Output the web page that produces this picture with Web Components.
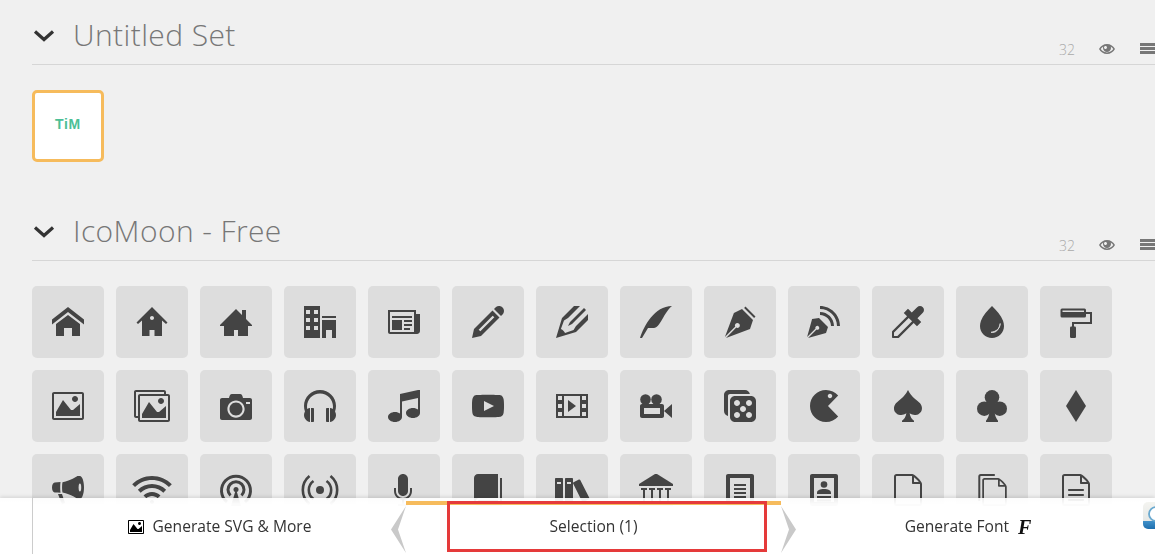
<!DOCTYPE html>
<html lang="en">
<head>
<meta charset="utf-8">
<title>IcoMoon</title>
<style>
html,body{margin:0;padding:0;height:100%;overflow:hidden;background:#f0f0f0;font-family:"Open Sans","Liberation Sans",sans-serif}
</style>
</head>
<body>
<im-app></im-app>
<script>
const FILE='M28.681 7.159c-0.694-0.947-1.662-2.053-2.724-3.116s-2.169-2.030-3.116-2.724c-1.612-1.182-2.393-1.319-2.841-1.319h-15.5c-1.378 0-2.5 1.121-2.5 2.5v27c0 1.378 1.122 2.5 2.5 2.5h23c1.378 0 2.5-1.122 2.5-2.5v-19.5c0-0.448-0.137-1.23-1.319-2.841zM24.543 5.457c0.959 0.959 1.712 1.825 2.268 2.543h-4.811v-4.811c0.718 0.556 1.584 1.309 2.543 2.268zM28 29.5c0 0.271-0.229 0.5-0.5 0.5h-23c-0.271 0-0.5-0.229-0.5-0.5v-27c0-0.271 0.229-0.5 0.5-0.5 0 0 15.499-0 15.5 0v7c0 0.552 0.448 1 1 1h7v19.5z';
const p=d=>`<path fill="currentColor" d="${d}"/>`;
const BG='#ddd';
const ICONS={
home:[32,p('M32 18.451l-16-12.42-16 12.42v-5.064l16-12.42 16 12.42zM28 18v12h-8v-8h-8v8h-8v-12l12-9z')],
home2:[32,p('M16 1L0.500 16.500l1.500 1.500 4-3.500V30h7.500v-6h5v6H26V14.500l4 3.500 1.500-1.500zM16 14c-1.105 0-2-0.895-2-2s0.895-2 2-2c1.105 0 2 0.895 2 2s-0.895 2-2 2z')],
home3:[32,p('M32 19l-6-6v-9h-4v5l-6-6-16 16v1h4v10h10v-6h4v6h10v-10h4z')],
office:[32,p('M0 32h16v-32h-16v32zM10 4h4v4h-4v-4zM10 12h4v4h-4v-4zM10 20h4v4h-4v-4zM2 4h4v4h-4v-4zM2 12h4v4h-4v-4zM2 20h4v4h-4v-4zM18 10h14v2h-14zM18 32h4v-8h6v8h4v-18h-14z')],
newspaper:[32,p('M28 8v-4h-28v22c0 1.105 0.895 2 2 2h27c1.657 0 3-1.343 3-3v-17h-4zM26 26h-24v-20h24v20zM4 10h20v2h-20zM16 14h8v2h-8zM16 18h8v2h-8zM16 22h6v2h-6zM4 14h10v10h-10z')],
pencil:[32,p('M27 0c2.761 0 5 2.239 5 5 0 1.126-0.372 2.164-1 3l-2 2-7-7 2-2c0.836-0.628 1.874-1 3-1zM2 23l-2 9 9-2 18.5-18.5-7-7-18.5 18.5zM22.362 11.362l-14 14-1.724-1.724 14-14 1.724 1.724z')],
pencil2:[32,p('M12 20l4-2 14-14-2-2-14 14-2 4zM9.041 27.097c-0.989-2.085-2.052-3.149-4.137-4.137l3.097-8.525 4-2.435 12-12h-6l-12 12-6 20 20-6 12-12v-6l-12 12-2.435 4z')],
quill:[32,p('M0 32c4-12 14.469-32 32-32-8.219 6.594-12 22-18 22s-6 0-6 0l-6 10h-2z')],
pen:[32,p('M21.500 0.500l10 10-1.400 1.400-10-10zM18 3l11 11-3 9-24 9 10.300-10.400c0.800 0.500 2 0.400 2.800-0.300 1-1 1-2.600 0-3.500s-2.600-1-3.500 0c-0.800 0.800-0.900 2-0.300 2.800l-10.400 10.300 9-24z')],
blog:[32,p('M12 0c11 0 20 9 20 20h-3c0-9.400-7.600-17-17-17zM12 6c7.700 0 14 6.300 14 14h-3c0-6-5-11-11-11zM11 12l9 9-2 6-18 5 8.500-8.500c0.700 0.400 1.600 0.300 2.200-0.300 0.800-0.800 0.800-2 0-2.800s-2-0.800-2.800 0c-0.600 0.600-0.700 1.500-0.300 2.200l-8.500 8.500 5-18z')],
eyedropper:[32,p('M30.828 1.172c-1.562-1.562-4.095-1.562-5.657 0l-5.379 5.379-3.793-3.793-4.243 4.243 3.326 3.326-14.754 14.754c-0.252 0.252-0.358 0.592-0.322 0.921h-0.008v5c0 0.552 0.448 1 1 1h5c0 0 0.083 0 0.125 0 0.288 0 0.576-0.11 0.795-0.329l14.754-14.754 3.326 3.326 4.243-4.243-3.793-3.793 5.379-5.379c1.562-1.562 1.562-4.095 0-5.657zM5.409 30h-3.409v-3.409l14.674-14.674 3.409 3.409-14.674 14.674z')],
droplet:[32,p('M27.020 14.786c-2.055-5.732-6.41-9.786-11.020-14.786-4.61 5-8.965 9.054-11.020 14.786-0.639 1.782-0.98 3.697-0.98 5.214 0 6.627 5.373 12 12 12s12-5.373 12-12c0-1.517-0.341-3.432-0.98-5.214z')+`<path d="M24.200 17.500c0 4.500-3.500 8-9.200 8.800 4.500 0.900 7.800-1.800 9.200-8.800z" fill="${BG}" stroke="${BG}" stroke-width=".8"/>`],
paint:[32,`<rect x="0.500" y="2.500" width="25.500" height="9" rx="1.500" fill="currentColor"/><rect x="2.500" y="4.500" width="21.500" height="1.500" fill="${BG}"/><path d="M26 7h5v10H13v4" fill="none" stroke="currentColor" stroke-width="2"/><rect x="10" y="20.500" width="6" height="11.500" rx="1.200" fill="currentColor"/>`],
image:[32,p('M29.996 4c0.001 0.001 0.003 0.002 0.004 0.004v23.993c-0.001 0.001-0.002 0.003-0.004 0.004h-27.993c-0.001-0.001-0.003-0.002-0.004-0.004v-23.993c0.001-0.001 0.002-0.003 0.004-0.004h27.993zM30 2h-28c-1.1 0-2 0.9-2 2v24c0 1.1 0.9 2 2 2h28c1.1 0 2-0.9 2-2v-24c0-1.1-0.9-2-2-2v0z')+p('M26 9c0 1.657-1.343 3-3 3s-3-1.343-3-3 1.343-3 3-3 3 1.343 3 3z')+p('M28 26h-24v-4l7-12 8 10h2l7-6z')],
images:[36,p('M34 4h-2v-2c0-1.1-0.9-2-2-2h-28c-1.1 0-2 0.9-2 2v24c0 1.1 0.9 2 2 2h2v2c0 1.1 0.9 2 2 2h28c1.1 0 2-0.9 2-2v-24c0-1.1-0.9-2-2-2zM4 6v20h-1.996c-0.001-0.001-0.003-0.002-0.004-0.004v-23.993c0.001-0.001 0.002-0.003 0.004-0.004h27.993c0.001 0.001 0.003 0.002 0.004 0.004v1.996h-24c-1.1 0-2 0.9-2 2v0zM34 29.996c-0.001 0.001-0.002 0.003-0.004 0.004h-27.993c-0.001-0.001-0.003-0.002-0.004-0.004v-23.993c0.001-0.001 0.002-0.003 0.004-0.004h27.993c0.001 0.001 0.003 0.002 0.004 0.004v23.993z')+p('M30 11c0 1.657-1.343 3-3 3s-3-1.343-3-3 1.343-3 3-3 3 1.343 3 3z')+p('M32 28h-24v-4l7-12 8 10h2l7-6z')],
camera:[32,p('M9.5 19c0 3.59 2.91 6.5 6.5 6.5s6.5-2.91 6.5-6.5-2.91-6.5-6.5-6.5-6.5 2.91-6.5 6.5zM30 8h-7c-0.5-2-1-4-3-4h-8c-2 0-2.5 2-3 4h-7c-1.1 0-2 0.9-2 2v18c0 1.1 0.9 2 2 2h28c1.1 0 2-0.9 2-2v-18c0-1.1-0.9-2-2-2zM16 27.625c-4.764 0-8.625-3.861-8.625-8.625s3.861-8.625 8.625-8.625c4.764 0 8.625 3.861 8.625 8.625s-3.861 8.625-8.625 8.625zM30 14h-4v-2h4v2z')],
headphones:[32,p('M9 18h-2v14h2c0.55 0 1-0.45 1-1v-12c0-0.55-0.45-1-1-1z')+p('M23 18c-0.55 0-1 0.45-1 1v12c0 0.55 0.45 1 1 1h2v-14h-2z')+p('M32 16c0-8.837-7.163-16-16-16s-16 7.163-16 16c0 1.919 0.338 3.759 0.958 5.464-0.609 1.038-0.958 2.246-0.958 3.536 0 3.526 2.608 6.443 6 6.929v-13.857c-0.997 0.143-1.927 0.495-2.742 1.012-0.168-0.835-0.258-1.699-0.258-2.584 0-7.18 5.82-13 13-13s13 5.82 13 13c0 0.885-0.088 1.749-0.257 2.584-0.816-0.517-1.745-0.87-2.743-1.013v13.858c3.392-0.485 6-3.402 6-6.929 0-1.29-0.349-2.498-0.958-3.536 0.62-1.705 0.958-3.545 0.958-5.465z')],
music:[32,p('M30 0h2v23c0 2.761-3.134 5-7 5s-7-2.239-7-5c0-2.761 3.134-5 7-5 1.959 0 3.729 0.575 5 1.501v-11.501l-16 3.556v15.444c0 2.761-3.134 5-7 5s-7-2.239-7-5c0-2.761 3.134-5 7-5 1.959 0 3.729 0.575 5 1.501v-19.501l18-4z')],
play:[32,p('M31.681 9.6c0 0-0.313-2.206-1.275-3.175-1.219-1.275-2.581-1.281-3.206-1.356-4.475-0.325-11.194-0.325-11.194-0.325h-0.012c0 0-6.719 0-11.194 0.325-0.625 0.075-1.987 0.081-3.206 1.356-0.963 0.969-1.269 3.175-1.269 3.175s-0.319 2.588-0.319 5.181v2.425c0 2.587 0.319 5.181 0.319 5.181s0.313 2.206 1.269 3.175c1.219 1.275 2.819 1.231 3.531 1.369 2.563 0.244 10.881 0.319 10.881 0.319s6.725-0.012 11.2-0.331c0.625-0.075 1.988-0.081 3.206-1.356 0.962-0.969 1.275-3.175 1.275-3.175s0.319-2.587 0.319-5.181v-2.425c-0.006-2.588-0.325-5.181-0.325-5.181zM12 21v-10l10 5z')],
film:[32,p('M0 4v24h32v-24h-32zM6 26h-4v-4h4v4zM6 18h-4v-4h4v4zM6 10h-4v-4h4v4zM24 26h-16v-20h16v20zM30 26h-4v-4h4v4zM30 18h-4v-4h4v4zM30 10h-4v-4h4v4zM12 10v12l8-6z')],
video:[32,`<circle cx="5.500" cy="9.500" r="5.300" fill="currentColor"/><circle cx="16.500" cy="9.500" r="5.300" fill="currentColor"/>`+p('M2 14h20c1.100 0 2 0.900 2 2v10c0 1.100-0.900 2-2 2h-20c-1.100 0-2-0.900-2-2v-10c0-1.100 0.900-2 2-2zM4 18v6h16v-6zM32 14v14l-8-7z')],
dice:[32,p('M27 6h-16c-2.75 0-5 2.25-5 5v16c0 2.75 2.25 5 5 5h16c2.75 0 5-2.25 5-5v-16c0-2.75-2.25-5-5-5zM13 28c-1.657 0-3-1.343-3-3s1.343-3 3-3 3 1.343 3 3-1.343 3-3 3zM13 16c-1.657 0-3-1.343-3-3s1.343-3 3-3 3 1.343 3 3-1.343 3-3 3zM19 22c-1.657 0-3-1.343-3-3s1.343-3 3-3 3 1.343 3 3-1.343 3-3 3zM25 28c-1.657 0-3-1.343-3-3s1.343-3 3-3 3 1.343 3 3-1.343 3-3 3zM25 16c-1.657 0-3-1.343-3-3s1.343-3 3-3 3 1.343 3 3-1.343 3-3 3zM25.899 4c-0.467-2.275-2.491-4-4.899-4h-16c-2.75 0-5 2.25-5 5v16c0 2.408 1.725 4.432 4 4.899v-19.899c0-1.1 0.9-2 2-2h19.899z')],
pacman:[32,p('M30.148 5.588c-2.934-3.42-7.288-5.588-12.148-5.588-8.837 0-16 7.163-16 16s7.163 16 16 16c4.86 0 9.213-2.167 12.148-5.588l-10.148-10.412 10.148-10.412zM22 3.769c1.232 0 2.231 0.999 2.231 2.231s-0.999 2.231-2.231 2.231-2.231-0.999-2.231-2.231 0.999-2.231 2.231-2.231z')],
spades:[32,p('M25.549 10.88c-6.049-4.496-8.133-8.094-9.549-10.88v0c-0 0-0-0-0-0v0c-1.415 2.785-3.5 6.384-9.549 10.88-10.314 7.665-0.606 18.365 7.93 12.476-0.556 3.654-2.454 6.318-4.381 7.465v1.179h12.001v-1.179c-1.928-1.147-3.825-3.811-4.382-7.465 8.535 5.889 18.244-4.811 7.93-12.476z')],
clubs:[32,`<circle cx="16" cy="7.300" r="7.300" fill="currentColor"/><circle cx="8.300" cy="18.700" r="7.300" fill="currentColor"/><circle cx="23.700" cy="18.700" r="7.300" fill="currentColor"/>`+p('M13 12h6v6l-0.500 4c0.500 3.500 1.500 6.300 3.500 8.800v1.200h-12v-1.200c2-2.500 3-5.300 3.500-8.800l-0.500-4z')],
diamonds:[32,p('M16 0l-10 16 10 16 10-16z')],
bullhorn:[32,p('M32 13.414c0-6.279-1.837-11.373-4.109-11.413 0.009-0 0.018-0.001 0.027-0.001h-2.592c0 0-6.088 4.573-14.851 6.367-0.268 1.415-0.438 3.102-0.438 5.047s0.171 3.631 0.438 5.047c8.763 1.794 14.851 6.367 14.851 6.367h2.592c-0.009 0-0.018-0.001-0.027-0.001 2.272-0.040 4.109-5.134 4.109-11.413z')+`<ellipse cx="27.900" cy="13.400" rx="1.300" ry="4" fill="${BG}"/>`+p('M8.500 8.100c-1.900 0.300-3.800 0.300-5.800 0.300-1.500 0-2.700 2.300-2.700 5s1.200 5 2.700 5c2 0 3.900 0 5.800 0.300-0.200-1.600-0.300-3.400-0.300-5.300s0.100-3.700 0.300-5.300zM6 20h4l3 9-3 1.500z')],
connection:[40,p('M20 18c3.308 0 6.308 1.346 8.481 3.519l-2.827 2.827c-1.449-1.449-3.449-2.346-5.654-2.346s-4.206 0.897-5.654 2.346l-2.827-2.827c2.173-2.173 5.173-3.519 8.481-3.519zM5.858 15.858c3.777-3.777 8.8-5.858 14.142-5.858s10.365 2.080 14.142 5.858l-2.828 2.828c-3.022-3.022-7.040-4.686-11.314-4.686s-8.292 1.664-11.314 4.686l-2.828-2.828zM30.899 4.201c3.334 1.41 6.329 3.429 8.899 6v0l-2.828 2.828c-4.533-4.533-10.56-7.029-16.97-7.029s-12.437 2.496-16.97 7.029l-2.828-2.828c2.571-2.571 5.565-4.589 8.899-6 3.453-1.46 7.12-2.201 10.899-2.201s7.446 0.741 10.899 2.201zM18 28c0-1.105 0.895-2 2-2s2 0.895 2 2c0 1.105-0.895 2-2 2s-2-0.895-2-2z')],
podcast:[32,`<g fill="none" stroke="currentColor" stroke-width="3"><path d="M7 28a14.500 14.500 0 1 1 18 0"/><path d="M10.500 21.500a8 8 0 1 1 11 0"/></g><circle cx="16" cy="15.500" r="2.500" fill="currentColor"/>`+p('M16 15l5 17h-10z')],
feed:[32,`<circle cx="16" cy="16" r="4" fill="currentColor"/><g fill="none" stroke="currentColor" stroke-width="2.600"><path d="M9.500 7a11 11 0 0 0 0 18M22.500 7a11 11 0 0 1 0 18"/><path d="M5.500 2a18 18 0 0 0 0 28M26.500 2a18 18 0 0 1 0 28"/></g>`],
mic:[32,p('M15 22c2.761 0 5-2.239 5-5v-12c0-2.761-2.239-5-5-5s-5 2.239-5 5v12c0 2.761 2.239 5 5 5zM22 14v3c0 3.866-3.134 7-7 7s-7-3.134-7-7v-3h-2v3c0 4.632 3.5 8.447 8 8.944v4.056h-4v2h10v-2h-4v-4.056c4.5-0.497 8-4.312 8-8.944v-3h-2z')],
book:[32,p('M28 4v26h-21c-1.657 0-3-1.343-3-3s1.343-3 3-3h19v-24h-20c-2.2 0-4 1.8-4 4v24c0 2.2 1.8 4 4 4h24v-28h-2z')+p('M7.002 26v0c-0.001 0-0.001 0-0.002 0-0.552 0-1 0.448-1 1s0.448 1 1 1c0.001 0 0.001-0 0.002-0v0h18.997v-2h-18.997z')],
books:[34,p('M7 4h-6c-0.55 0-1 0.45-1 1v22c0 0.55 0.45 1 1 1h6c0.55 0 1-0.45 1-1v-22c0-0.55-0.45-1-1-1zM6 10h-4v-2h4v2z')+p('M17 4h-6c-0.55 0-1 0.45-1 1v22c0 0.55 0.45 1 1 1h6c0.55 0 1-0.45 1-1v-22c0-0.55-0.45-1-1-1zM16 10h-4v-2h4v2z')+p('M23.909 5.546l-5.358 2.7c-0.491 0.247-0.691 0.852-0.443 1.343l8.999 17.861c0.247 0.491 0.852 0.691 1.343 0.443l5.358-2.7c0.491-0.247 0.691-0.852 0.443-1.343l-8.999-17.861c-0.247-0.491-0.852-0.691-1.343-0.443z')],
library:[34,p('M32 30v-2h-2v-12h2v-2h-6v2h2v12h-6v-12h2v-2h-6v2h2v12h-6v-12h2v-2h-6v2h2v12h-6v-12h2v-2h-6v2h2v12h-2v2h-2v2h34v-2h-2z')+p('M16 0h2l16 10v2h-34v-2z')],
filetext:[32,p('M28 0h-24c-1.1 0-2 0.9-2 2v28c0 1.1 0.9 2 2 2h24c1.1 0 2-0.9 2-2v-28c0-1.1-0.9-2-2-2zM26 28h-20v-24h20v24zM10 10h12v2h-12zM10 14h12v2h-12zM10 18h12v2h-12zM10 22h12v2h-12z')],
profile:[32,p('M28 0h-24c-1.1 0-2 0.9-2 2v28c0 1.1 0.9 2 2 2h24c1.1 0 2-0.9 2-2v-28c0-1.1-0.9-2-2-2zM26 28h-20v-24h20v24z')+`<circle cx="16" cy="10.500" r="3.300" fill="currentColor"/>`+p('M9 19c0-3 3-4 7-4s7 1 7 4v1h-14zM9 22h14v2h-14zM9 25.500h14v2h-14z')],
fileempty:[32,p(FILE)],
filesempty:[32,`<path d="M3.300 27V2.500c0-.5.500-1.500 1.500-1.500h14" fill="none" stroke="currentColor" stroke-width="2"/><g transform="translate(4.500 4) scale(.875)">${p(FILE)}</g>`],
filetext2:[32,p(FILE)+p('M9 15h14c0.552 0 1 0.448 1 1s-0.448 1-1 1h-14c-0.552 0-1-0.448-1-1s0.448-1 1-1zM9 20h14c0.552 0 1 0.448 1 1s-0.448 1-1 1h-14c-0.552 0-1-0.448-1-1s0.448-1 1-1zM9 25h14c0.552 0 1 0.448 1 1s-0.448 1-1 1h-14c-0.552 0-1-0.448-1-1s0.448-1 1-1z')]
};
const EYE='M16 6c-6.979 0-13.028 4.064-16 10 2.972 5.936 9.021 10 16 10s13.027-4.064 16-10c-2.972-5.936-9.021-10-16-10zM23.889 11.303c1.88 1.199 3.473 2.805 4.67 4.697-1.197 1.892-2.79 3.498-4.67 4.697-2.362 1.507-5.090 2.303-7.889 2.303s-5.527-0.796-7.889-2.303c-1.88-1.199-3.473-2.805-4.67-4.697 1.197-1.892 2.79-3.498 4.67-4.697 0.122-0.078 0.246-0.154 0.371-0.228-0.311 0.854-0.482 1.776-0.482 2.737 0 4.418 3.582 8 8 8s8-3.582 8-8c0-0.962-0.17-1.883-0.482-2.737 0.124 0.074 0.248 0.15 0.371 0.228v0zM16 13c0 1.657-1.343 3-3 3s-3-1.343-3-3 1.343-3 3-3 3 1.343 3 3z';

class ImIcon extends HTMLElement{
  connectedCallback(){
    const [w,body]=ICONS[this.getAttribute('name')];
    const size=+(this.getAttribute('size')||32);
    const r=this.shadowRoot||this.attachShadow({mode:'open'});
    r.innerHTML=`<style>:host{display:block;width:${size*w/32}px;height:${size}px;flex:none}svg{display:block;overflow:visible}</style><svg width="${size*w/32}" height="${size}" viewBox="0 0 ${w} 32" aria-hidden="true">${body}</svg>`;
  }
}
customElements.define('im-icon',ImIcon);

class ImTile extends HTMLElement{
  connectedCallback(){
    const r=this.shadowRoot||this.attachShadow({mode:'open'});
    const sel=this.hasAttribute('selected');
    r.innerHTML=`<style>
    :host{display:flex;box-sizing:border-box;width:72px;height:72px;border-radius:5px;align-items:center;justify-content:center;background:#ddd;color:#444}
    :host([selected]){background:#fff;border:3px solid #f6bb5c;color:#4cc096}
    </style><slot></slot>`;
    if(!sel&&this.getAttribute('icon')&&!this.children.length){
      const i=document.createElement('im-icon');i.setAttribute('name',this.getAttribute('icon'));this.appendChild(i);
    }
  }
}
customElements.define('im-tile',ImTile);

const setT=document.createElement('template');
setT.innerHTML=`<style>
:host{display:block;margin-left:32px;padding-bottom:34px}
header{display:flex;align-items:flex-start;height:64px;border-bottom:1px solid #d6d6d6;margin-bottom:25px}
.chev{flex:none;margin:29px 18px 0 1px;display:block}
h2{margin:0;flex:1;font:300 30px/1 "Open Sans","Liberation Sans",sans-serif;color:#777;padding-top:20px;letter-spacing:.4px;white-space:nowrap}
.count{font:300 14px/1 "Open Sans","Liberation Sans",sans-serif;color:#aaa;margin-top:43px}
.eye{display:block;margin:41px 0 0 24px;color:#777}
.menu{margin:43px 0 0 25px;width:15px;height:11px;background:linear-gradient(#777 0 3px,transparent 3px 4px,#777 4px 7px,transparent 7px 8px,#777 8px 11px)}
.grid{display:grid;grid-template-columns:repeat(13,72px);gap:12px}
</style>
<header>
<svg class="chev" width="22" height="14" viewBox="0 0 22 14" aria-hidden="true"><path d="M2 2.500l9 8 9-8" fill="none" stroke="#333" stroke-width="3.200"/></svg>
<h2></h2><span class="count">32</span>
<svg class="eye" width="16" height="16" viewBox="0 0 32 32" aria-hidden="true"><path fill="currentColor" d="${EYE}"/></svg>
<div class="menu"></div>
</header>
<div class="grid"><slot></slot></div>`;
class ImSet extends HTMLElement{
  connectedCallback(){
    const r=this.shadowRoot||this.attachShadow({mode:'open'});
    if(!r.firstChild)r.appendChild(setT.content.cloneNode(true));
    r.querySelector('h2').textContent=this.getAttribute('title');
  }
}
customElements.define('im-set',ImSet);

const barT=document.createElement('template');
barT.innerHTML=`<style>
:host{position:fixed;left:0;right:0;bottom:0;height:56px;display:block;background:linear-gradient(rgba(255,255,255,.9),rgba(255,255,255,.98) 6px);box-shadow:0 -1px 4px rgba(0,0,0,.13);font:15.600px/1 "Open Sans","Liberation Sans",sans-serif;color:#333}
.in{display:grid;grid-template-columns:373px 375px 1fr;height:100%;margin-left:32px;border-left:1px solid #ccc;box-sizing:border-box;position:relative}
.cell{display:flex;align-items:center;justify-content:center;gap:9px;padding-top:1px}
.mid{position:relative;border-top:4px solid #f6bb5c;margin-top:3px;padding-top:0;padding-bottom:5px;gap:0}
.arrow{position:absolute;top:1px}
.arrow.l{left:-15px}.arrow.r{right:-15px}
.red{position:absolute;left:41px;top:-4px;width:320px;height:51px;box-sizing:border-box;border:3px solid #e53a3a}
.f{font:italic 700 20px/1 "Liberation Serif",serif;color:#111}
.pic{color:#000}
.logo{position:absolute;right:0;top:4px;display:block}
</style>
<div class="in">
<div class="cell"><im-icon class="pic" name="image" size="16"></im-icon><span>Generate SVG &amp; More</span></div>
<div class="cell mid">
<svg class="arrow l" width="15" height="47" viewBox="0 0 15 47" aria-hidden="true"><path d="M15 0L0 23.500 15 47 7 23.500z" fill="#c9c9c9"/></svg>
<span>Selection (1)</span>
<svg class="arrow r" width="15" height="47" viewBox="0 0 15 47" aria-hidden="true"><path d="M0 0L15 23.500 0 47 8 23.500z" fill="#c9c9c9"/></svg>
<div class="red"></div>
</div>
<div class="cell"><span>Generate Font</span><span class="f">F</span></div>
<svg class="logo" width="12" height="27" viewBox="0 0 12 27" aria-hidden="true"><defs><linearGradient id="lg" x1="0" y1="0" x2="0" y2="1"><stop offset="0" stop-color="#f4f4f0"/><stop offset=".7" stop-color="#e6e8e6"/><stop offset=".72" stop-color="#3f8fc8"/><stop offset="1" stop-color="#1f6fae"/></linearGradient></defs><rect width="20" height="27" rx="5" fill="url(#lg)"/><circle cx="13" cy="12" r="7" fill="#fff" stroke="#6aa9cf" stroke-width="1.800"/></svg>
</div>`;
class ImBar extends HTMLElement{
  connectedCallback(){
    const r=this.shadowRoot||this.attachShadow({mode:'open'});
    if(!r.firstChild)r.appendChild(barT.content.cloneNode(true));
  }
}
customElements.define('im-bar',ImBar);

const NAMES=['home','home2','home3','office','newspaper','pencil','pencil2','quill','pen','blog','eyedropper','droplet','paint','image','images','camera','headphones','music','play','film','video','dice','pacman','spades','clubs','diamonds','bullhorn','connection','podcast','feed','mic','book','books','library','filetext','profile','fileempty','filesempty','filetext2'];
class ImApp extends HTMLElement{
  connectedCallback(){
    const r=this.shadowRoot||this.attachShadow({mode:'open'});
    r.innerHTML=`<style>:host{display:block}
    .tim{font:700 14px/1 "Liberation Sans",sans-serif;letter-spacing:.7px;color:#4cc096;margin-top:-5px}</style>
    <im-set title="Untitled Set"><im-tile selected><span class="tim">TiM</span></im-tile></im-set>
    <im-set title="IcoMoon - Free">${NAMES.map(n=>`<im-tile icon="${n}"></im-tile>`).join('')}</im-set>
    <im-bar></im-bar>`;
  }
}
customElements.define('im-app',ImApp);
</script>
</body>
</html>
